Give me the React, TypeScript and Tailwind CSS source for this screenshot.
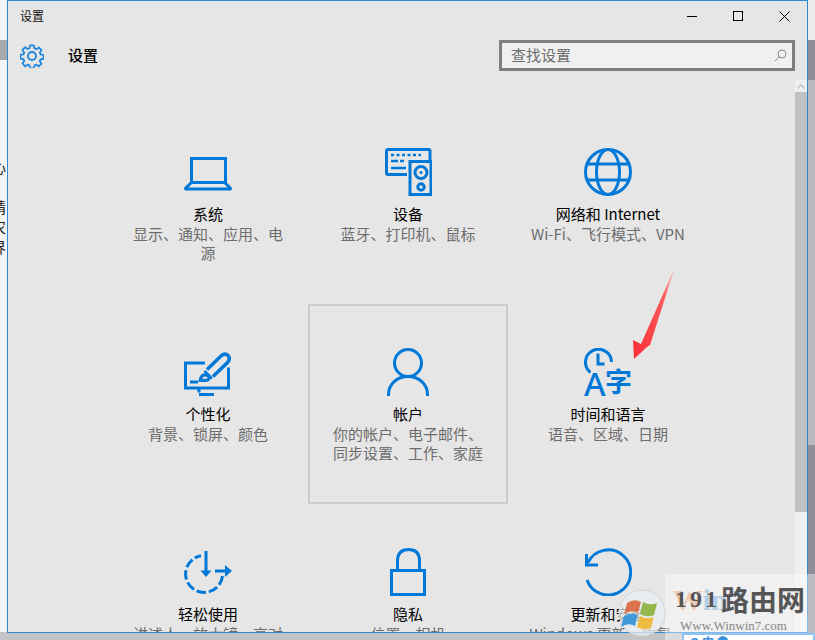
import React from 'react';

const font = '"Noto Sans CJK SC", "Liberation Sans", sans-serif';

const IconLaptop = () => (
    <svg width="48" height="48" viewBox="0 0 48 48" fill="none" stroke="#0078d7" strokeWidth="3">
        <path d="M7.5 35V10.5H41.5V35" />
        <path d="M7.5 34.5L1.8 40Q1 41.5 2.5 41H45.5Q47 41.5 46.2 40L40.5 34.5Z" />
    </svg>
);

const IconDevices = () => (
    <svg width="48" height="48" viewBox="-1 0 48 48" fill="none" stroke="#0078d7" strokeWidth="3">
        <path d="M22 26.5H3Q1.5 26.5 1.5 25V3Q1.5 1.5 3 1.5H43.5Q45 1.5 45 3V12" />
        <rect x="25" y="13.5" width="21" height="33" />
        <circle cx="36" cy="24.5" r="6" />
        <circle cx="36" cy="24.5" r="1.5" fill="#0078d7" stroke="none" />
        <circle cx="36" cy="39" r="3.2" />
        <path d="M6 7H36" strokeWidth="2.5" strokeDasharray="3 2.5" />
        <path d="M6 13H20" strokeWidth="2.5" strokeDasharray="7 2 4" />
        <path d="M6 20H21" strokeWidth="2.5" />
    </svg>
);

const IconGlobe = () => (
    <svg width="48" height="48" viewBox="0 0 48 48" fill="none" stroke="#0078d7" strokeWidth="3">
        <circle cx="24" cy="24" r="22.5" />
        <ellipse cx="24" cy="24" rx="11.5" ry="22.5" />
        <path d="M4 16H44M4 32H44" />
    </svg>
);

const IconBrush = () => (
    <svg width="48" height="48" viewBox="0 -4.5 48 48" fill="none" stroke="#0078d7" strokeWidth="3">
        <path d="M21 10.5H1.5V35.5H44.5V15" />
        <path d="M15 40V36M15 42H30" />
        <path d="M6 29.5H14" />
        <path d="M23 17L37 3.5Q41 0 44 3Q47 6 43.5 10L29 24" strokeWidth="3.5" />
        <path d="M20.5 18.5L28 26" strokeWidth="2.5" />
        <path d="M19 21Q14.5 23 14.5 29.5H21Q26.5 29.5 26.5 25.5Q25.5 20 19 21Z" fill="#0078d7" stroke="none" />
        <path d="M19 26Q21 24 23 26" stroke="#e6e6e6" strokeWidth="2" />
    </svg>
);

const IconPerson = () => (
    <svg width="48" height="48" viewBox="0 0 48 48" fill="none" stroke="#0078d7" strokeWidth="3">
        <circle cx="24" cy="15" r="13.5" />
        <path d="M4.5 48V46.5C4.5 36 13 28.5 24 28.5S43.5 36 43.5 46.5V48" />
    </svg>
);

const IconTimeLang = () => (
    <svg width="48" height="48" viewBox="0 0 48 48" fill="none" stroke="#0078d7" strokeWidth="3">
        <path d="M6.5 24.5A13 13 0 1 1 27.5 14" />
        <path d="M14 5.5V16H20.5" />
        <text x="0" y="48" fontSize="33" fill="#0078d7" stroke="none" fontFamily='"Noto Sans", sans-serif' fontWeight="500">A</text>
        <text x="21" y="44" fontSize="27" fill="#0078d7" stroke="none" fontFamily={font} fontWeight="700">字</text>
    </svg>
);

const IconEase = () => (
    <svg width="48" height="48" viewBox="0 0 48 48" fill="none" stroke="#0078d7" strokeWidth="3">
        <path d="M38.5 28A18.5 18.5 0 1 1 17 7.7" strokeDasharray="9.5 3" />
        <path d="M22 3V25" />
        <path d="M16.5 22.5L22 29L27.5 22.5Z" fill="#0078d7" stroke="none" />
        <path d="M31 23H43" />
        <path d="M41 17L48 23L41 29Z" fill="#0078d7" stroke="none" />
    </svg>
);

const IconLock = () => (
    <svg width="48" height="48" viewBox="0 0 48 48" fill="none" stroke="#0078d7" strokeWidth="3">
        <rect x="7.5" y="22.5" width="33" height="24" />
        <path d="M13.5 21V13Q13.5 1.5 24.5 1.5T35.5 13V21" />
    </svg>
);

const IconUpdate = () => (
    <svg width="48" height="48" viewBox="0 0 48 48" fill="none" stroke="#0078d7" strokeWidth="3">
        <path d="M4 14.5A22.5 22.5 0 1 1 3 32" />
        <path d="M2.5 6V17H14" />
    </svg>
);

const IconGear = () => (
    <svg width="24" height="24" viewBox="0 0 24 24" fill="none" stroke="#1f86de" strokeWidth="1.9" strokeLinejoin="round">
        <path d="M10 .8h4l.6 3.2 1.9.8 2.7-1.8 2.8 2.8-1.8 2.7.8 1.9 3.2.6v3.9l-3.2.6-.8 1.9 1.8 2.7-2.8 2.8-2.7-1.8-1.9.8-.6 3.2H10l-.6-3.2-1.9-.8-2.7 1.8L2 19.9l1.8-2.7-.8-1.9L-.2 14.7v-4l3.2-.5.8-1.9L2 5.6l2.8-2.8 2.7 1.8 1.9-.8z" transform="translate(.6 .6) scale(.95)" />
        <circle cx="12" cy="12" r="4" />
    </svg>
);

const tiles = [
    { icon: <IconLaptop />, title: '系统', desc: '显示、通知、应用、电源' },
    { icon: <IconDevices />, title: '设备', desc: '蓝牙、打印机、鼠标' },
    { icon: <IconGlobe />, title: '网络和 Internet', desc: 'Wi-Fi、飞行模式、VPN' },
    { icon: <IconBrush />, title: '个性化', desc: '背景、锁屏、颜色' },
    { icon: <IconPerson />, title: '帐户', desc: '你的帐户、电子邮件、同步设置、工作、家庭', selected: true },
    { icon: <IconTimeLang />, title: '时间和语言', desc: '语音、区域、日期' },
    { icon: <IconEase />, title: '轻松使用', desc: '讲述人、放大镜、高对比度' },
    { icon: <IconLock />, title: '隐私', desc: '位置、相机' },
    { icon: <IconUpdate />, title: '更新和安全', desc: 'Windows 更新、恢复、备份' },
];

const Tile = ({ icon, title, desc, selected }: { icon: React.ReactNode; title: string; desc: string; selected?: boolean }) => (
    <div className={`w-[200px] h-[200px] shrink-0 flex flex-col items-center pt-[42px] border-2 ${selected ? 'border-[#cccccc]' : 'border-transparent'}`}>
        <div className="h-[48px]">{icon}</div>
        <div className="mt-[8px] text-[15px] leading-[20px] text-black whitespace-nowrap">{title}</div>
        <div className="w-[162px] text-center text-[15px] leading-[19px] text-[#6d6d6d]">{desc}</div>
    </div>
);

export default function App() {
    return (
        <div className="relative flex w-[815px] h-[640px] overflow-hidden bg-[#c4c4c6]" style={{ fontFamily: font }}>
            {/* desktop peeking out on the left */}
            <div className="w-[7px] h-[640px] shrink-0 bg-[#f4f4f4] flex flex-col overflow-hidden text-[15px] leading-[20px] text-[#222]">
                <div className="h-[40px]" />
                <div className="h-[20px] bg-[#a8a9ad]" />
                <div className="h-[97px]" />
                <div className="-ml-[9px] w-[20px]">心</div>
                <div className="h-[20px]" />
                <div className="-ml-[9px] w-[20px]">棈</div>
                <div className="-ml-[9px] w-[20px]">农</div>
                <div className="-ml-[9px] w-[20px]">界</div>
                <div className="flex-1" />
                <div className="h-[8px] bg-[#c4c4c6]" />
            </div>

            {/* settings window */}
            <div className="w-[801px] h-[633px] shrink-0 flex flex-col border border-[#2b88d8] bg-[#e6e6e6] overflow-hidden">
                <div className="h-[79px] shrink-0 flex flex-col">
                    <div className="h-[30px] flex items-center justify-between pl-[12px]">
                        <span className="text-[12px] leading-[30px] text-[#111]">设置</span>
                        <div className="flex items-center gap-[36px] pr-[17px]">
                            <div className="w-[10px] h-[1px] bg-black" />
                            <div className="w-[10px] h-[10px] border border-black" />
                            <svg width="11" height="11" viewBox="0 0 11 11" stroke="#000" strokeWidth="1"><path d="M.5.5L10.5 10.5M10.5.5L.5 10.5" /></svg>
                        </div>
                    </div>
                    <div className="flex items-center pl-[12px] pr-[12px] mt-[9px]">
                        <IconGear />
                        <span className="ml-[24px] text-[15px] font-medium text-black">设置</span>
                        <div className="ml-auto w-[296px] h-[31px] border-[3px] border-[#7f7f7f] bg-[#f0f0f0] flex items-center justify-between pl-[9px] pr-[5px]">
                            <span className="text-[15px] text-[#6d6d6d]">查找设置</span>
                            <svg width="13" height="13" viewBox="0 0 13 13" fill="none" stroke="#8a8a8a" strokeWidth="1"><circle cx="8" cy="5" r="4" /><path d="M5 8L.8 12.2" /></svg>
                        </div>
                    </div>
                </div>
                <div className="flex-1 min-h-0 flex">
                    <div className="flex-1 min-h-0 overflow-hidden pl-[100px] pt-[24px]">
                        <div className="grid grid-cols-[200px_200px_200px] auto-rows-[200px]">
                            {tiles.map((t) => (
                                <Tile key={t.title} {...t} />
                            ))}
                        </div>
                    </div>
                    <div className="w-[12px] shrink-0 flex flex-col bg-[#f0f0f0]">
                        <div className="h-[12px] flex items-center justify-center">
                            <svg width="8" height="5" viewBox="0 0 8 5" fill="none" stroke="#c0c0c0" strokeWidth="1.4"><path d="M.5 4.5L4 1L7.5 4.5" /></svg>
                        </div>
                        <div className="h-[420px] bg-[#c1c1c1]" />
                    </div>
                </div>
            </div>

            {/* desktop peeking out on the right */}
            <div className="w-[7px] h-[640px] shrink-0 flex flex-col">
                <div className="h-[40px] bg-[#ececec]" />
                <div className="h-[40px] bg-[#8f8f99]" />
                <div className="h-[365px] bg-[#b8b8bd]" />
                <div className="flex-1 bg-[#8f8f99]" />
            </div>

            {/* red arrow drawn on the screenshot */}
            <svg className="absolute left-[625px] top-[262px]" width="60" height="105" viewBox="0 0 60 105">
                <defs>
                    <linearGradient id="arrow" x1="1" y1="0" x2="0" y2="1">
                        <stop offset="0" stopColor="#ffd0d0" />
                        <stop offset="0.3" stopColor="#fb5a5a" />
                        <stop offset="1" stopColor="#fa3037" />
                    </linearGradient>
                </defs>
                <path d="M50 5L25 83L22 85L9 97L8 78L16 82Z" fill="url(#arrow)" />
            </svg>

            {/* site watermark */}
            <div className="absolute left-[665px] top-[574px] w-[150px] h-[66px] bg-white/40 overflow-hidden">
                <div className="absolute left-[8px] top-[6px] text-[30px] leading-[40px] font-bold opacity-30 whitespace-nowrap" style={{ fontFamily: '"Liberation Serif", serif' }}>
                    <span className="text-[#e8702a]">W</span>
                    <span className="text-[#2b88d8]">in7</span>
                </div>
                <div className="relative flex items-center pl-[10px] h-[40px] mt-[5px] text-[#555555] font-bold">
                    <span className="text-[24px] tracking-[3px]" style={{ fontFamily: '"Liberation Serif", serif' }}>191</span>
                    <span className="text-[28px] leading-[40px] ml-[1px]">路由网</span>
                </div>
                <div className="relative text-[13px] leading-[14px] pl-[15px] text-[#888888]" style={{ fontFamily: '"Liberation Serif", serif' }}>Www.Winwin7.com</div>
                <div className="relative ml-[17px] h-[20px] pl-[6px] bg-white border-2 border-[#8fc4f0] text-[12px] leading-[14px] text-[#3a8fdc] font-bold">Q 中 ●</div>
            </div>
            <svg className="absolute left-[618px] top-[589px]" width="48" height="48" viewBox="0 0 48 48">
                <circle cx="24" cy="24" r="23" fill="#e9edf0" fillOpacity="0.75" stroke="#cfd6da" />
                <path d="M9 14Q16 9 23 13L20 24Q14 20 6 25Z" fill="#d9663a" fillOpacity="0.9" />
                <path d="M25 13Q32 17 39 14L36 26Q29 29 22 25Z" fill="#8cb33c" fillOpacity="0.9" />
                <path d="M6 27Q13 23 19.5 26L17 37Q10 33 3 38Z" fill="#2f8fd6" fillOpacity="0.9" />
                <path d="M22 27Q29 31 35.5 28L33 39Q26 42 19 38Z" fill="#f1b62f" fillOpacity="0.9" />
            </svg>
        </div>
    );
}
